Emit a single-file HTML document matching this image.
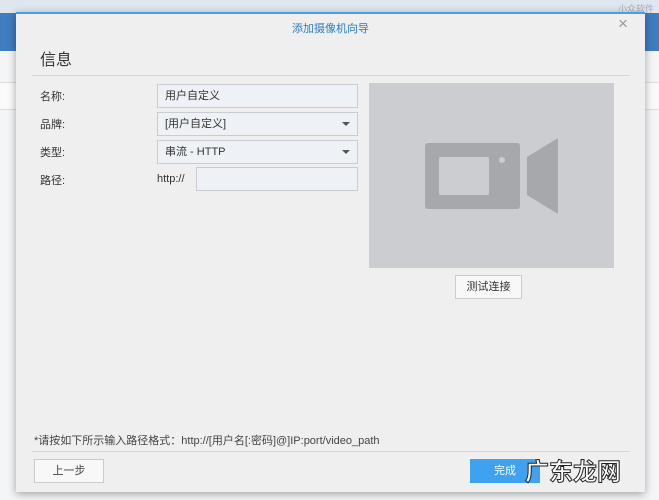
<!DOCTYPE html>
<html><head><meta charset="utf-8"><style>
body{margin:0;width:659px;height:500px;overflow:hidden;background:#f2f3f5;font-family:"Liberation Sans","Noto Sans CJK SC",sans-serif;position:relative}
.a{position:absolute}
.lbl{font-size:11px;color:#333}
.inp{position:absolute;background:#eef1f5;border:1px solid #c9cdd3;box-sizing:border-box;font-size:11px;color:#333;padding-left:7px;line-height:23px}
.arr{position:absolute;right:7px;top:9px;width:0;height:0;border-left:4px solid transparent;border-right:4px solid transparent;border-top:4px solid #555}
</style></head><body>
<div class="a" style="left:0;top:0;width:659px;height:13px;background:#dfe6ef"></div>
<div class="a" style="left:0;top:13px;width:659px;height:38px;background:#3f7cc0"></div>
<div class="a" style="left:0;top:51px;width:659px;height:449px;background:#f4f5f7"></div>
<div class="a" style="left:0;top:82px;width:659px;height:26px;background:#fafafa;border-top:1px solid #ddd;border-bottom:1px solid #ddd"></div>
<div class="a" style="left:618px;top:2px;font-size:9px;color:#aab">小众软件</div>
<div class="a" style="left:16px;top:12px;width:629px;height:478px;background:#efefef;box-shadow:0 2px 8px rgba(0,0,0,.35);border-top:2px solid #4a9ee0"></div>
<div class="a" style="left:16px;top:20px;width:629px;text-align:center;font-size:11px;color:#2b7cc4">添加摄像机向导</div>
<div class="a" style="left:618px;top:14px;font-size:17px;color:#999">×</div>
<div class="a" style="left:40px;top:46px;font-size:16px;color:#333">信息</div>
<div class="a" style="left:32px;top:75px;width:597px;height:1px;background:#d6d6d6"></div>
<div class="a lbl" style="left:40px;top:88px">名称:</div>
<div class="a lbl" style="left:40px;top:116px">品牌:</div>
<div class="a lbl" style="left:40px;top:144px">类型:</div>
<div class="a lbl" style="left:40px;top:172px">路径:</div>
<div class="inp" style="left:157px;top:84px;width:201px;height:24px">用户自定义</div>
<div class="inp" style="left:157px;top:112px;width:201px;height:24px">[用户自定义]<div class="arr"></div></div>
<div class="inp" style="left:157px;top:140px;width:201px;height:24px">串流 - HTTP<div class="arr"></div></div>
<div class="a lbl" style="left:157px;top:173px">http://</div>
<div class="inp" style="left:196px;top:167px;width:162px;height:24px"></div>
<div class="a" style="left:369px;top:83px;width:245px;height:185px;background:#cbcdd1"></div>
<svg class="a" style="left:0;top:0" width="659" height="500">
<rect x="425" y="143" width="95" height="66" rx="3" fill="#a6a8ab"/>
<rect x="439" y="157" width="50" height="38" rx="2" fill="#cbcdd1"/>
<circle cx="502" cy="160" r="3" fill="#cbcdd1"/>
<polygon points="527,157 558,138 558,214 527,195" fill="#a6a8ab"/>
</svg>
<div class="a" style="left:455px;top:275px;width:67px;height:24px;background:#f8f8f8;border:1px solid #ccc;box-sizing:border-box;font-size:11px;color:#333;text-align:center;line-height:22px">测试连接</div>
<div class="a" style="left:34px;top:432px;font-size:11px;color:#444">*请按如下所示输入路径格式：http://[用户名[:密码]@]IP:port/video_path</div>
<div class="a" style="left:32px;top:451px;width:597px;height:1px;background:#d6d6d6"></div>
<div class="a" style="left:34px;top:459px;width:70px;height:24px;background:#f8f8f8;border:1px solid #ccc;box-sizing:border-box;font-size:11px;color:#444;text-align:center;line-height:22px">上一步</div>
<div class="a" style="left:470px;top:459px;width:70px;height:24px;background:#3fa2f0;font-size:11px;color:#fff;text-align:center;line-height:24px">完成</div>
<div class="a" style="left:525px;top:452px;font-size:24px;font-weight:bold;color:#fff;-webkit-text-stroke:1px #222">广东龙网</div>
</body></html>
